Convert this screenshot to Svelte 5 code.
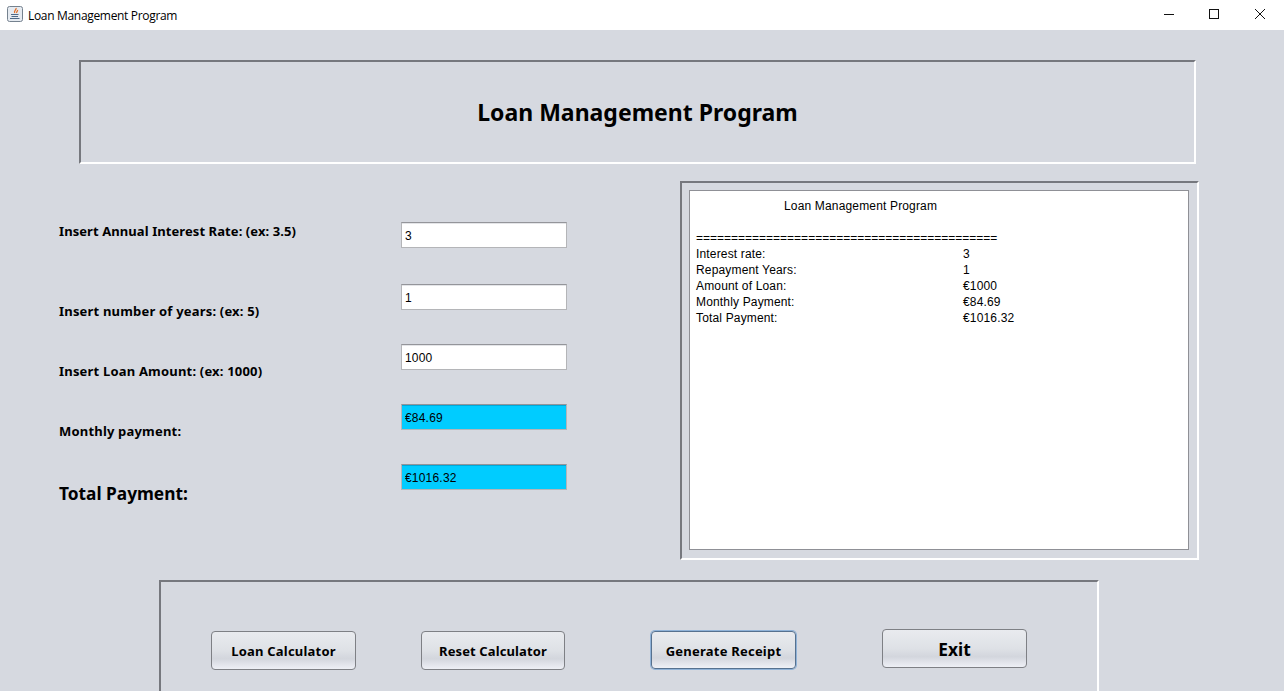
<script lang="ts">
	const fields = [
		{ label: 'Insert Annual Interest Rate: (ex: 3.5)', value: '3', kind: 'first' },
		{ label: 'Insert number of years: (ex: 5)', value: '1', kind: 'low' },
		{ label: 'Insert Loan Amount: (ex: 1000)', value: '1000', kind: 'low' },
		{ label: 'Monthly payment:', value: '€84.69', kind: 'low result' },
		{ label: 'Total Payment:', value: '€1016.32', kind: 'total result' }
	];

	const receipt = [
		['Interest rate:', '3'],
		['Repayment Years:', '1'],
		['Amount of Loan:', '€1000'],
		['Monthly Payment:', '€84.69'],
		['Total Payment:', '€1016.32']
	];
</script>

<div class="window">
	<header class="titlebar">
		<svg class="java" viewBox="0 0 16 16" width="16" height="16" aria-hidden="true">
			<rect x="0.5" y="0.5" width="15" height="15" rx="2" fill="#e6ebf1" stroke="#75828f" />
			<path d="M9 2c1 1.500-2.500 2.500-1.300 5M10.500 4c.5 1-1.500 1.800-.8 3" fill="none" stroke="#e2702a" stroke-width="1.300" />
			<path d="M4 8.500h7.500M4.500 10.500h6.500M3 12.500h9.500" fill="none" stroke="#4f6a88" stroke-width="1.100" />
		</svg>
		<span class="app-name">Loan Management Program</span>
		<div class="controls">
			<svg viewBox="0 0 12 12" width="12" height="12" aria-hidden="true"><path d="M0 5.500h10" stroke="#111" fill="none" /></svg>
			<svg viewBox="0 0 12 12" width="12" height="12" aria-hidden="true"><rect x="0.5" y="0.5" width="9" height="9" stroke="#111" fill="none" /></svg>
			<svg viewBox="0 0 12 12" width="12" height="12" aria-hidden="true"><path d="M1 0l10 10M11 0L1 10" stroke="#111" fill="none" /></svg>
		</div>
	</header>

	<main class="content">
		<section class="banner etched">
			<h1>Loan Management Program</h1>
		</section>

		<div class="middle">
			<form class="form">
				{#each fields as field}
					<div class="row {field.kind}">
						<span class="label">{field.label}</span>
						<input class="field" type="text" value={field.value} readonly />
					</div>
				{/each}
			</form>

			<section class="receipt-panel etched">
				<div class="receipt">
					<p class="receipt-title">Loan Management Program</p>
					<p class="rule">===========================================</p>
					{#each receipt as [name, amount]}
						<div class="line"><span>{name}</span><span>{amount}</span></div>
					{/each}
				</div>
			</section>
		</div>

		<section class="actions etched">
			<button class="btn" type="button">Loan Calculator</button>
			<button class="btn reset" type="button">Reset Calculator</button>
			<button class="btn focused" type="button">Generate Receipt</button>
			<button class="btn exit" type="button">Exit</button>
		</section>
	</main>
</div>

<style>
	:global(body) {
		margin: 0;
		overflow: hidden;
	}

	.window {
		width: 1284px;
		height: 691px;
		overflow: hidden;
		background: #d6d9e0;
		font-family: 'Liberation Sans', Arial, sans-serif;
		color: #000;
	}

	.titlebar {
		height: 30px;
		background: #fff;
		display: flex;
		align-items: center;
		padding-left: 7px;
		box-sizing: border-box;
	}

	.java {
		margin: 0 5px 2px 0;
	}

	.app-name {
		font-family: 'Open Sans', sans-serif;
		font-size: 12px;
		letter-spacing: -0.32px;
	}

	.controls {
		margin-left: auto;
		display: flex;
		gap: 33px;
		padding-right: 18px;
	}

	.content {
		padding: 30px 0 0 79px;
		box-sizing: border-box;
	}

	.etched {
		box-sizing: border-box;
		border: 2px solid;
		border-color: #76787e #fff #fff #76787e;
	}

	.banner {
		width: 1117px;
		height: 104px;
		display: flex;
		align-items: center;
		justify-content: center;
	}

	h1 {
		margin: 0;
		font-family: 'Noto Sans', sans-serif;
		font-size: 23px;
		font-weight: 700;
	}

	.middle {
		display: flex;
		margin: 17px 0 0 -20px;
	}

	.form {
		width: 621px;
		padding-top: 41px;
		box-sizing: border-box;
	}

	.row {
		display: grid;
		grid-template-columns: 342px 166px;
		height: 60px;
	}

	.row.first {
		height: 62px;
	}

	.label {
		font-family: 'Noto Sans', sans-serif;
		font-weight: 700;
		font-size: 13px;
		line-height: 18px;
		letter-spacing: 0.19px;
	}

	.low .label {
		padding-top: 18px;
	}

	.first .label {
		letter-spacing: 0.08px;
	}

	.total .label {
		font-size: 17.3px;
		line-height: 22px;
		padding-top: 19px;
		letter-spacing: 0;
	}

	.field {
		box-sizing: border-box;
		width: 166px;
		height: 26px;
		padding: 1px 3px 0;
		font-family: 'Liberation Sans', Arial, sans-serif;
		font-size: 12px;
		letter-spacing: 0.2px;
		color: #000;
		background: #fff;
		border: 1px solid #b4b5b8;
		border-top: 1px solid #94959a;
		box-shadow: inset 0 1px 0 #e4e5e8;
		border-radius: 0;
		outline: none;
	}

	.result .field {
		background: #00ccff;
		box-shadow: inset 0 1px 0 #00a8d8;
	}

	.receipt-panel {
		width: 519px;
		height: 379px;
		padding: 7px 8px 8px 7px;
	}

	.receipt {
		box-sizing: border-box;
		height: 360px;
		width: 500px;
		background: #fff;
		border: 1px solid #8f9096;
		padding: 7px 6px;
		font-size: 12px;
		line-height: 16px;
		letter-spacing: 0.16px;
	}

	p {
		margin: 0;
	}

	.receipt-title {
		padding-left: 88px;
	}

	.rule {
		margin-top: 16px;
		letter-spacing: 0;
		white-space: nowrap;
	}

	.line {
		display: grid;
		grid-template-columns: 267px 1fr;
	}

	.actions {
		width: 940px;
		height: 140px;
		margin: 20px 0 0 80px;
		padding: 49px 0 0 50px;
		display: flex;
		align-items: flex-start;
		border-bottom: 0;
	}

	.btn {
		box-sizing: border-box;
		width: 145px;
		height: 39px;
		padding: 0;
		margin-right: 65px;
		border: 1px solid #7e8085;
		border-radius: 4px;
		background: linear-gradient(#e9ebef, #dee1e6 50%, #d3d6dd 72%, #eef0f6);
		font-family: 'Noto Sans', sans-serif;
		font-weight: 700;
		font-size: 13px;
		letter-spacing: 0.22px;
		color: #000;
	}

	.reset {
		width: 144px;
		margin-right: 86px;
		letter-spacing: 0.12px;
	}

	.focused {
		height: 38px;
		padding-top: 1px;
		margin-right: 86px;
		border-color: #56718f;
		box-shadow: 0 0 0 1px #8fb2d8;
	}

	.exit {
		font-size: 17.3px;
		letter-spacing: 0;
		padding-top: 1px;
		margin: -2px 0 0;
	}
</style>
